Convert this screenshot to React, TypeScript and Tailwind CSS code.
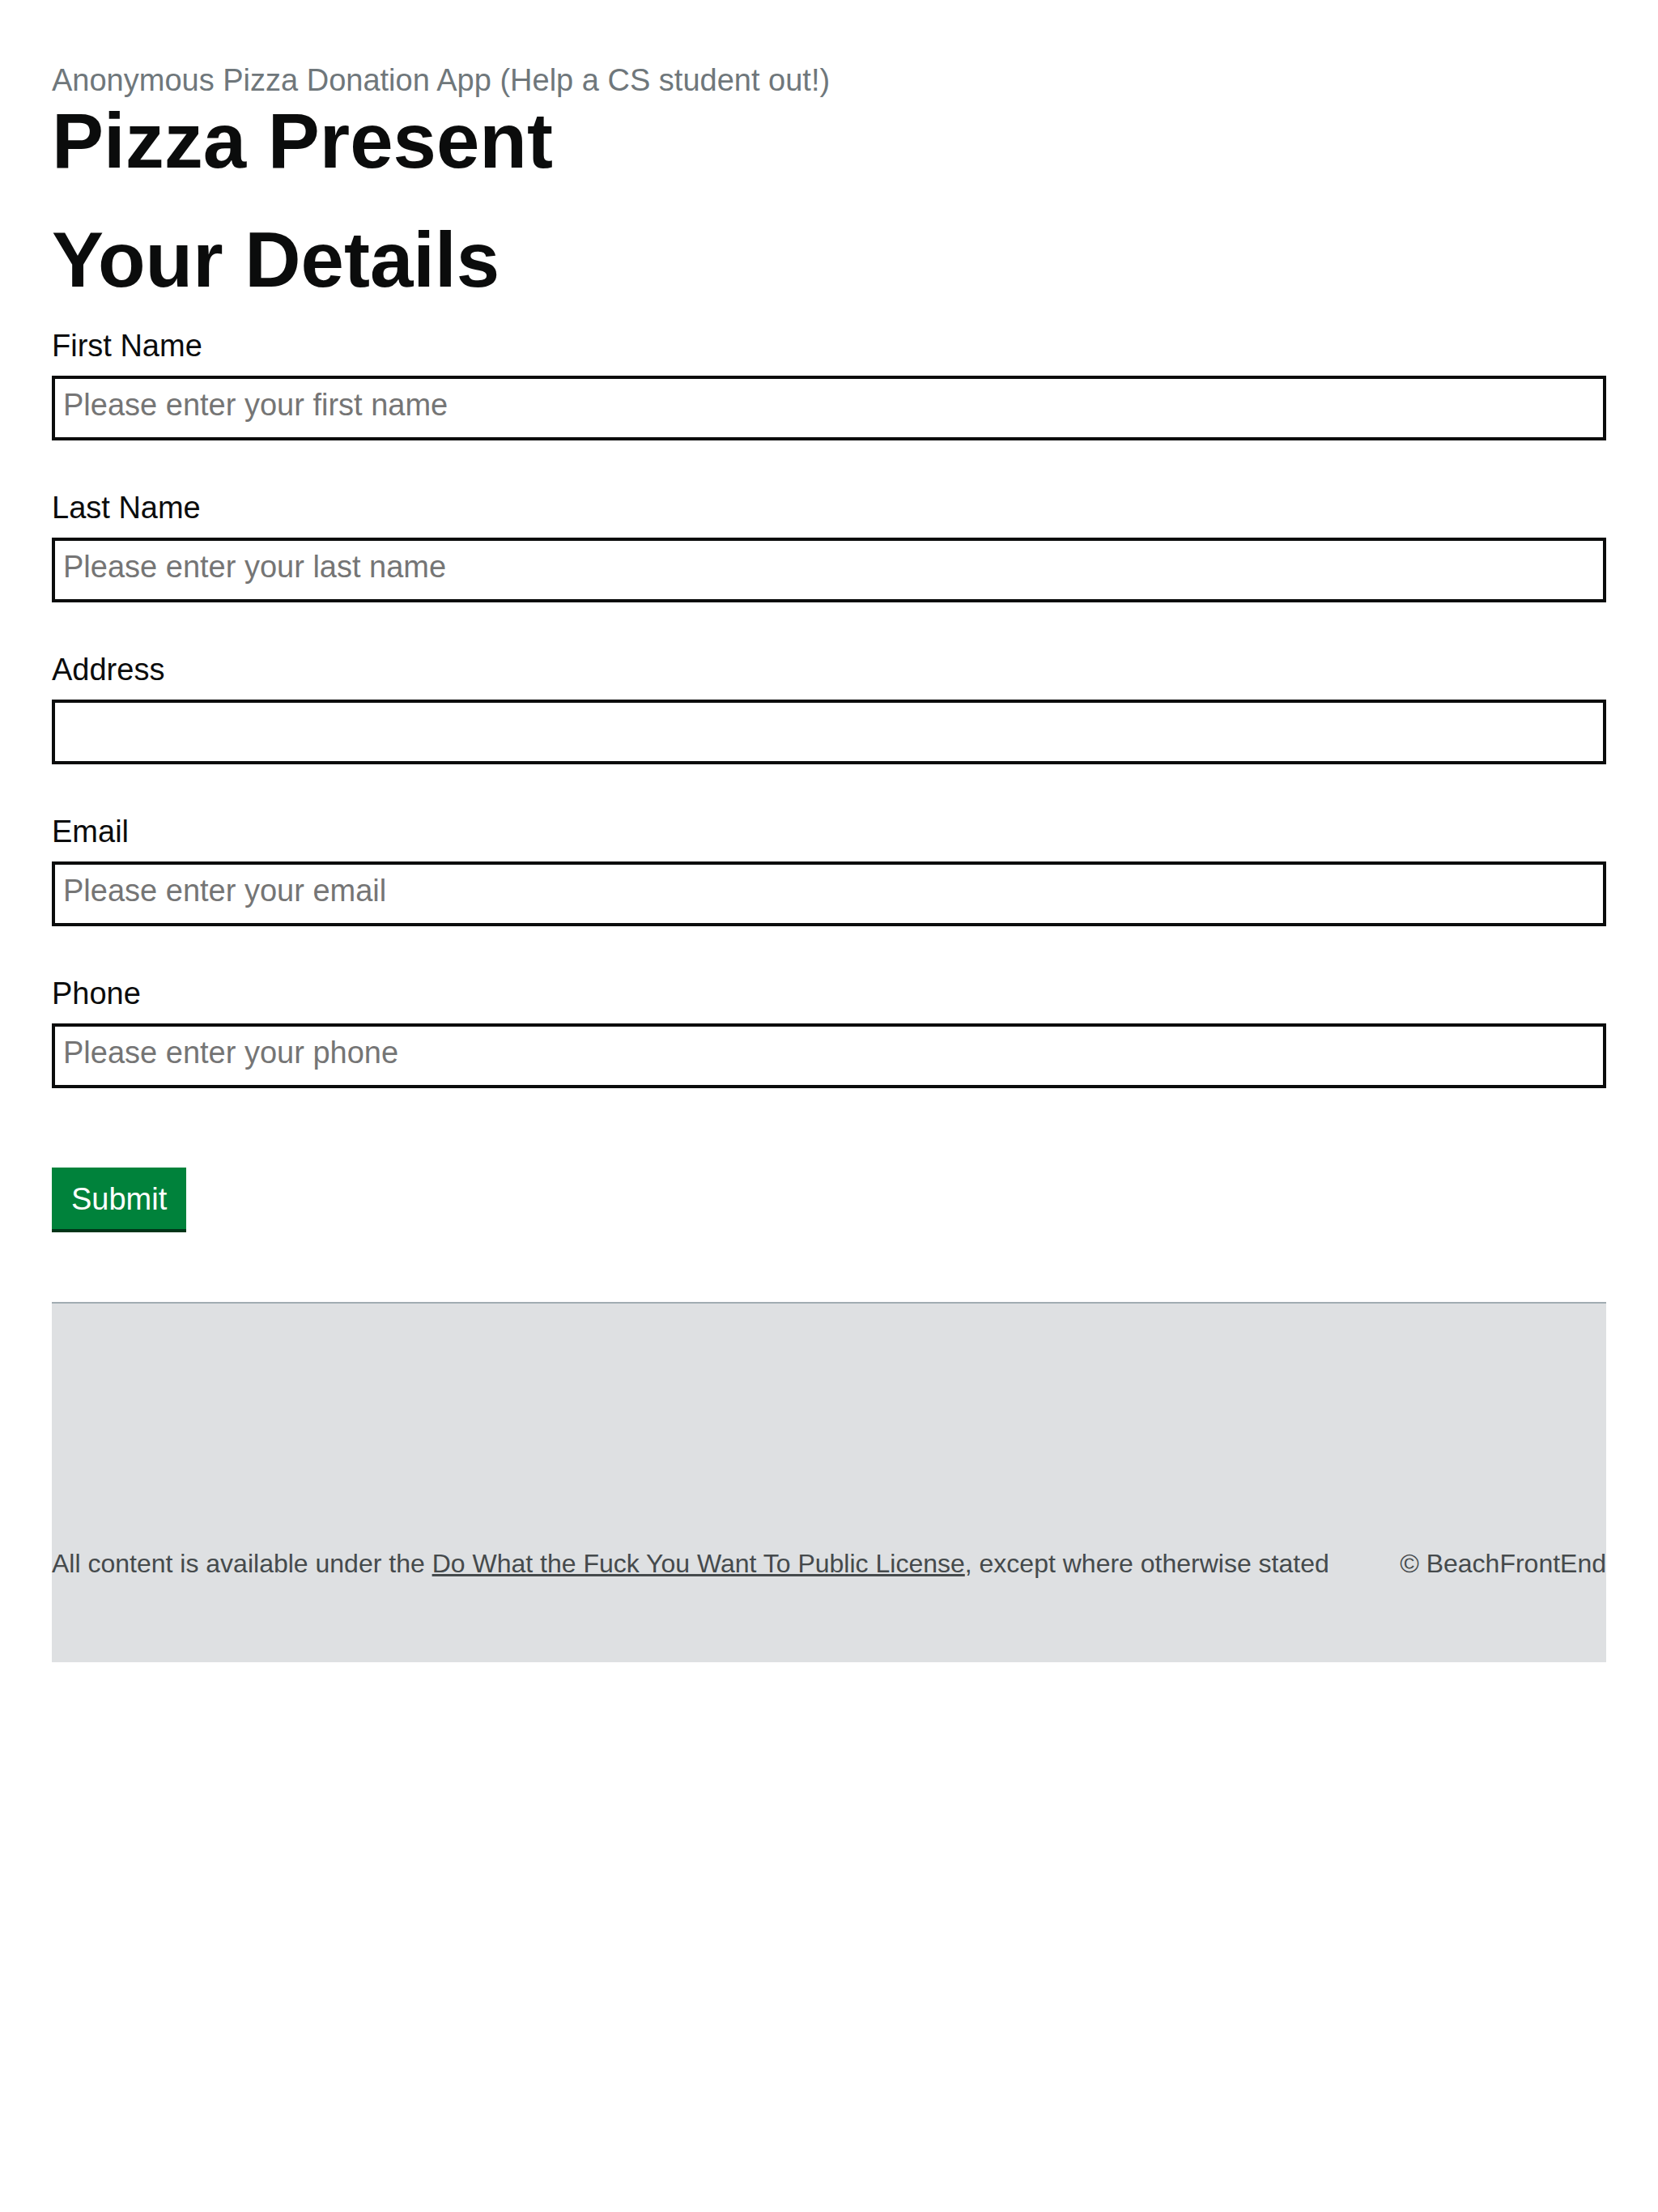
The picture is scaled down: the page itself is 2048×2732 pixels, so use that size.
import React from "react";

const fields = [
  { label: "First Name", placeholder: "Please enter your first name" },
  { label: "Last Name", placeholder: "Please enter your last name" },
  { label: "Address", placeholder: "" },
  { label: "Email", placeholder: "Please enter your email" },
  { label: "Phone", placeholder: "Please enter your phone" },
];

export default function App() {
  return (
    <div className="min-h-[2732px] bg-white font-['Liberation_Sans',Arial,sans-serif] text-[#0b0c0c]">
      <div className="px-[64px] pt-[74px]">
        <main>
          <span className="block text-[38px] leading-[50px] text-[#6f777b]">
            Anonymous Pizza Donation App (Help a CS student out!)
          </span>
          <h1 className="text-[96px] leading-[100px] font-bold">Pizza Present</h1>
          <h2 className="mt-[47px] text-[96px] leading-[100px] font-bold">Your Details</h2>
          <form className="mt-[31px]" onSubmit={(e) => e.preventDefault()}>
            {fields.map((f) => (
              <div key={f.label} className="mb-[58px]">
                <label className="block text-[38px] leading-[50px] mb-[12px]">{f.label}</label>
                <input
                  type="text"
                  placeholder={f.placeholder}
                  className="block w-full h-[80px] border-[4px] border-[#0b0c0c] px-[10px] pt-0 pb-[8px] text-[38px] leading-[50px] text-[#0b0c0c] placeholder:text-[#757575] outline-none bg-white"
                />
              </div>
            ))}
            <button
              type="submit"
              className="block mt-[98px] h-[76px] px-[20px] pt-[2px] border-[4px] border-transparent bg-[#00823b] text-white text-[38px] leading-none shadow-[0_4px_0_#003618]"
            >
              Submit
            </button>
          </form>
        </main>
        <footer className="mt-[90px] border-t-[2px] border-[#a1acb2] bg-[#dee0e2] pt-[301px] pb-[102px]">
          <div className="flex justify-between text-[32px] leading-[40px] text-[#454a4c]">
            <span>
              All content is available under the{" "}
              <a href="#" className="underline text-[#454a4c]">
                Do What the Fuck You Want To Public License
              </a>
              , except where otherwise stated
            </span>
            <span>© BeachFrontEnd</span>
          </div>
        </footer>
      </div>
    </div>
  );
}
